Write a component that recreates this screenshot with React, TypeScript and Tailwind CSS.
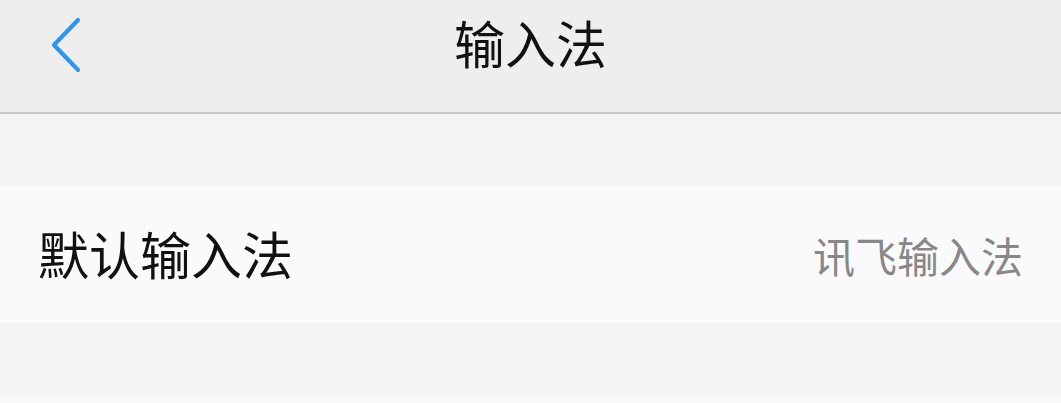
export default function App() {
  return (
    <div
      className="w-[1061px] h-[403px] flex flex-col bg-[#f4f4f4] overflow-hidden"
      style={{ fontFamily: '"Noto Sans CJK SC", "Noto Sans", sans-serif' }}
    >
      <header className="h-[114px] shrink-0 bg-[#eeeeee] border-b-2 border-[#c8c8c8] relative flex items-center justify-center">
        <button className="absolute left-[46px] top-[14px] w-[40px] h-[62px] flex items-center justify-center">
          <svg width="40" height="62" viewBox="0 0 40 62">
            <path
              d="M32 6 L8 31 L32 56"
              fill="none"
              stroke="#2e95f0"
              strokeWidth="4.2"
              strokeLinecap="round"
              strokeLinejoin="round"
            />
          </svg>
        </button>
        <h1 className="text-[51px] leading-none text-[#111111] -mt-[28px]">输入法</h1>
      </header>
      <div className="h-[72px] shrink-0" />
      <div className="h-[137px] shrink-0 bg-[#fafafa] flex items-center justify-between pl-[38px] pr-[38px]">
        <span className="text-[51px] leading-none text-[#111111] -mt-[3px]">默认输入法</span>
        <span className="text-[42px] leading-none text-[#888888] mt-[1px]">讯飞输入法</span>
      </div>
      <div className="h-[73px] shrink-0" />
      <div className="flex-1 bg-[#fafafa]" />
    </div>
  );
}
